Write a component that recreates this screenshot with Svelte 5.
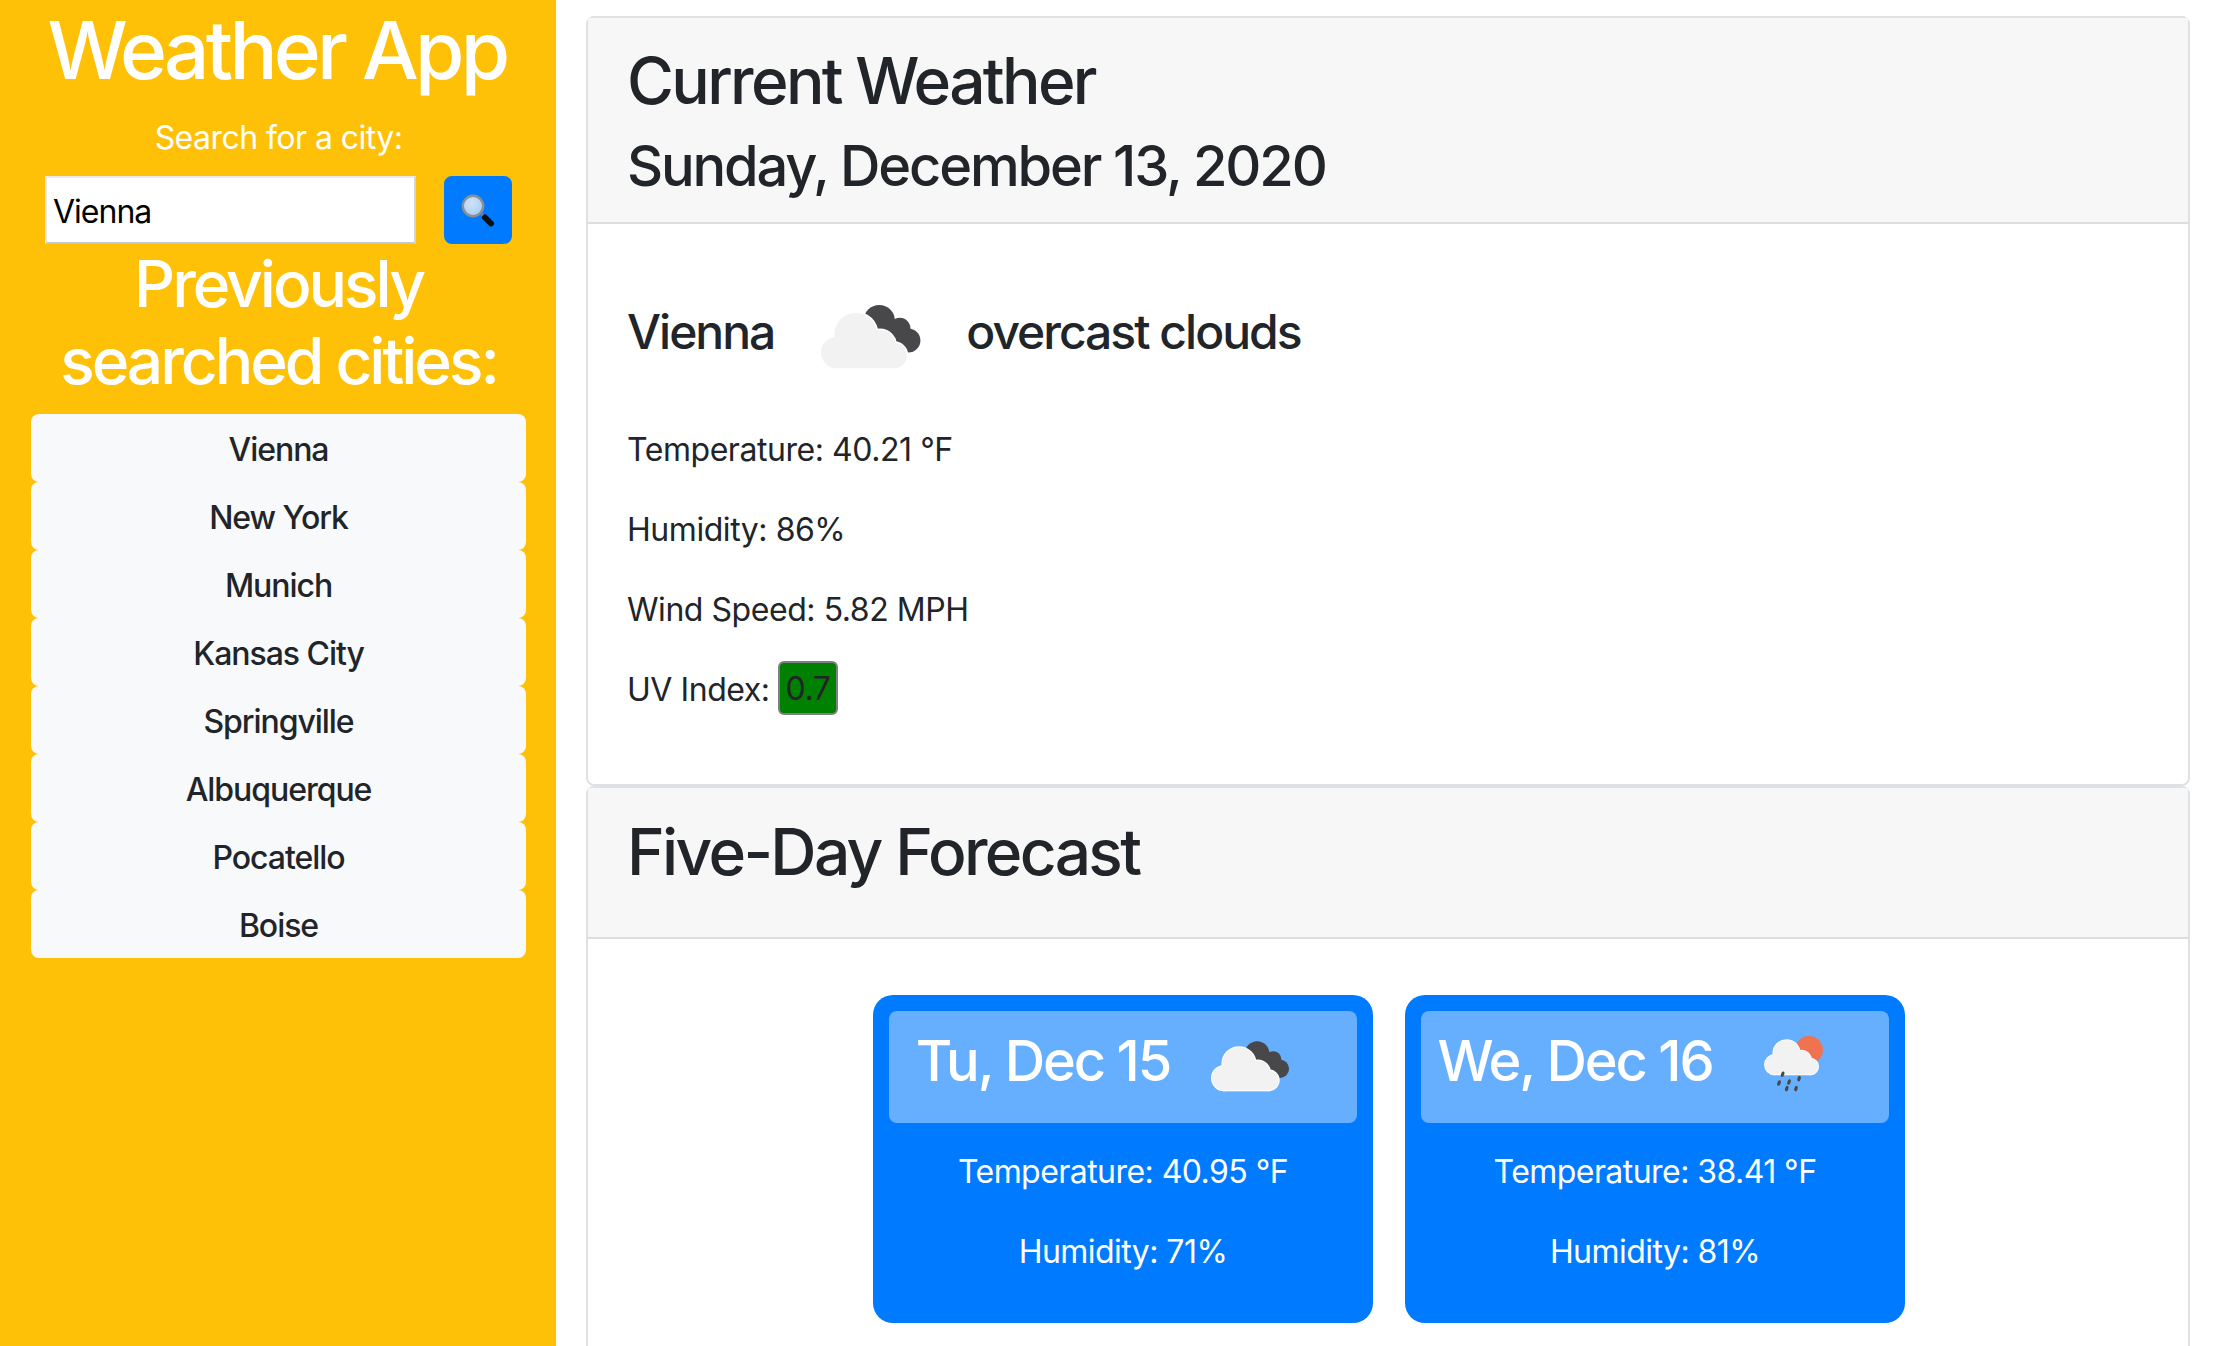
<script>
  const cities = ["Vienna", "New York", "Munich", "Kansas City", "Springville", "Albuquerque", "Pocatello", "Boise"];
  const forecast = [
    { date: "Tu, Dec 15", icon: "clouds", temp: "40.95", humidity: 71 },
    { date: "We, Dec 16", icon: "rain", temp: "38.41", humidity: 81 }
  ];
  const drops = [[40.6, 57.5], [37.3, 65.5], [46.4, 64.5], [55.5, 61.5], [44.3, 70.6], [52.7, 70.6]];
</script>

{#snippet cloud()}
  <g class="cloud">
    <circle cx="26.5" cy="61" r="11" />
    <circle cx="40" cy="48" r="15" />
    <circle cx="57" cy="56" r="11" />
    <circle cx="67" cy="63" r="9" />
    <rect x="26.5" y="52" width="40.5" height="20" />
  </g>
{/snippet}

{#snippet cloudsIcon()}
  <svg class="weather-icon" viewBox="0 0 100 100" role="img" aria-label="overcast clouds">
    <g fill="#48484a">
      <circle cx="56.5" cy="38.5" r="11" />
      <circle cx="71" cy="44" r="7.5" />
      <circle cx="77" cy="52.5" r="8.5" />
      <path d="M48 32 L74 42 L80 60 L66 62 Z" />
    </g>
    <g class="halo">{@render cloud()}</g>
    {@render cloud()}
  </svg>
{/snippet}

{#snippet rainIcon()}
  <svg class="weather-icon" viewBox="0 0 100 100" role="img" aria-label="light rain">
    <circle cx="64.5" cy="35.5" r="12.7" fill="#ef7350" />
    <g transform="translate(12.1 0) scale(0.8)">
      <g class="halo">{@render cloud()}</g>
      {@render cloud()}
    </g>
    {#each drops as d}
      <ellipse cx={d[0]} cy={d[1]} rx="1.5" ry="2.6" fill="#48484a" transform="rotate(20 {d[0]} {d[1]})" />
    {/each}
  </svg>
{/snippet}

<div class="page">
  <aside class="sidebar">
    <h1>Weather App</h1>
    <p class="search-label">Search for a city:</p>
    <form class="search" onsubmit={(e) => e.preventDefault()}>
      <input type="text" value="Vienna" aria-label="City" />
      <button type="submit" aria-label="Search">
        <svg width="40" height="40" viewBox="0 0 40 40">
          <defs>
            <radialGradient id="glass" cx="40%" cy="35%" r="70%">
              <stop offset="0" stop-color="#cfe3f8" />
              <stop offset="1" stop-color="#a9cdf3" />
            </radialGradient>
          </defs>
          <line x1="23.5" y1="24" x2="27" y2="27.5" stroke="#7b7f86" stroke-width="3" />
          <line x1="27" y1="27.5" x2="33" y2="33.5" stroke="#111" stroke-width="6" stroke-linecap="round" />
          <circle cx="15" cy="16" r="10.2" fill="url(#glass)" stroke="#8a8f97" stroke-width="2.4" />
        </svg>
      </button>
    </form>
    <h2>Previously searched cities:</h2>
    <ul class="cities">
      {#each cities as city}
        <li>{city}</li>
      {/each}
    </ul>
  </aside>

  <main class="content">
    <section class="card">
      <header class="card-head current-head">
        <h2>Current Weather</h2>
        <h3>Sunday, December 13, 2020</h3>
      </header>
      <div class="card-body current-body">
        <div class="city-row">
          <h4>Vienna</h4>
          {@render cloudsIcon()}
          <h4>overcast clouds</h4>
        </div>
        <p>Temperature: 40.21 °F</p>
        <p>Humidity: 86%</p>
        <p>Wind Speed: 5.82 MPH</p>
        <p class="uv-row">UV Index: <span class="uv">0.7</span></p>
      </div>
    </section>

    <section class="card grow">
      <header class="card-head forecast-head">
        <h2>Five-Day Forecast</h2>
      </header>
      <div class="card-body forecast-body">
        {#each forecast as day}
          <article class="day">
            <div class="day-head">
              <h3>{day.date}</h3>
              {#if day.icon === "rain"}
                {@render rainIcon()}
              {:else}
                {@render cloudsIcon()}
              {/if}
            </div>
            <p>Temperature: {day.temp} °F</p>
            <p>Humidity: {day.humidity}%</p>
          </article>
        {/each}
      </div>
    </section>
  </main>
</div>

<style>
  :global(body) {
    margin: 0;
    background: #fff;
    color: #212529;
    font-family: Inter, "Noto Sans", sans-serif;
    font-size: 32px;
    line-height: 48px;
    letter-spacing: -0.55px;
  }

  .page {
    display: flex;
    height: 100vh;
    overflow: hidden;
  }

  h1, h2, h3, h4, p, ul {
    margin: 0;
    padding: 0;
    font-weight: 500;
  }

  p {
    font-weight: 400;
  }

  h1 {
    font-size: 80px;
    line-height: 96px;
    letter-spacing: -3.7px;
  }

  h2 {
    font-size: 64px;
    line-height: 77px;
    letter-spacing: -2.65px;
  }

  h3 {
    font-size: 56px;
    line-height: 67px;
    letter-spacing: -2.15px;
  }

  h4 {
    font-size: 48px;
    line-height: 58px;
    letter-spacing: -2px;
  }

  .sidebar {
    box-sizing: border-box;
    width: 556px;
    flex: none;
    padding: 2px 30px 0 31px;
    background: #ffc107;
    color: #fff;
    text-align: center;
  }

  .sidebar h1 {
    margin-left: -3px;
  }

  .sidebar h2 {
    margin-top: 1px;
    letter-spacing: -3px;
  }

  .search-label {
    margin-top: 16px;
  }

  .search {
    display: flex;
    justify-content: space-between;
    gap: 28px;
    margin: 14px 14px 0;
  }

  .search input {
    box-sizing: border-box;
    flex: 1;
    min-width: 0;
    height: 68px;
    padding: 2px 6px 0;
    border: 2px solid;
    border-color: #e9e9e9 #d5d5d5 #c8c8cc #e9e9e9;
    background: #fff;
    color: #000;
    font: inherit;
    letter-spacing: -1px;
  }

  .search button {
    display: flex;
    align-items: center;
    justify-content: center;
    width: 68px;
    height: 68px;
    padding: 0;
    border: 0;
    border-radius: 8px;
    background: #007bff;
  }

  .cities {
    margin-top: 15px;
    list-style: none;
    color: #212529;
    letter-spacing: -1.05px;
  }

  .cities li {
    height: 68px;
    line-height: 71px;
    background: #f8f9fa;
    border-radius: 8px;
  }

  .content {
    flex: 1;
    min-width: 0;
    display: flex;
    flex-direction: column;
    padding: 16px 32px 0 30px;
  }

  .card {
    border: 2px solid #dfe2e5;
    border-radius: 8px;
    background: #fff;
  }

  .card.grow {
    flex: 1;
    border-bottom: 0;
  }

  .card-head {
    padding: 24px 39px;
    background: #f7f7f7;
    border-bottom: 2px solid #dedede;
  }

  .current-head {
    padding-bottom: 22px;
  }

  .current-head h2 {
    margin-bottom: 14px;
  }

  .forecast-head {
    padding-top: 25px;
    padding-bottom: 47px;
  }

  .current-body {
    padding: 40px 39px 38px;
  }

  .current-body p {
    margin-bottom: 32px;
    letter-spacing: -0.45px;
  }

  .current-body .uv-row {
    height: 48px;
  }

  .city-row {
    display: flex;
    align-items: center;
    margin-bottom: 18px;
  }

  .city-row h4 {
    margin-bottom: 8px;
  }

  .city-row .weather-icon {
    width: 142px;
    height: 142px;
    margin: 2px 25px 0;
  }

  .uv-row {
    display: flex;
    align-items: center;
    gap: 8px;
  }

  .uv {
    box-sizing: border-box;
    height: 54px;
    margin-bottom: 5px;
    padding: 0 6px;
    line-height: 52px;
    border: 2px solid #808080;
    border-radius: 6px;
    background: #008000;
  }

  .forecast-body {
    display: flex;
    justify-content: center;
    gap: 32px;
    padding: 56px 38px 56px 40px;
  }

  .day {
    box-sizing: border-box;
    width: 500px;
    height: 328px;
    padding: 16px;
    border-radius: 20px;
    background: #007bff;
    color: #fff;
    text-align: center;
  }

  .day-head {
    display: flex;
    align-items: center;
    justify-content: center;
    height: 112px;
    margin-bottom: 25px;
    border-radius: 8px;
    background: #66afff;
  }

  .day-head h3 {
    margin-bottom: 12px;
  }

  .day-head .weather-icon {
    width: 110px;
    height: 110px;
    margin: 0 25px 3px;
  }

  .day p {
    margin-bottom: 32px;
  }

  .cloud {
    fill: #f2f2f2;
  }

  .halo :global(.cloud) {
    stroke: #fff;
    stroke-width: 2;
    fill: #fff;
  }
</style>
